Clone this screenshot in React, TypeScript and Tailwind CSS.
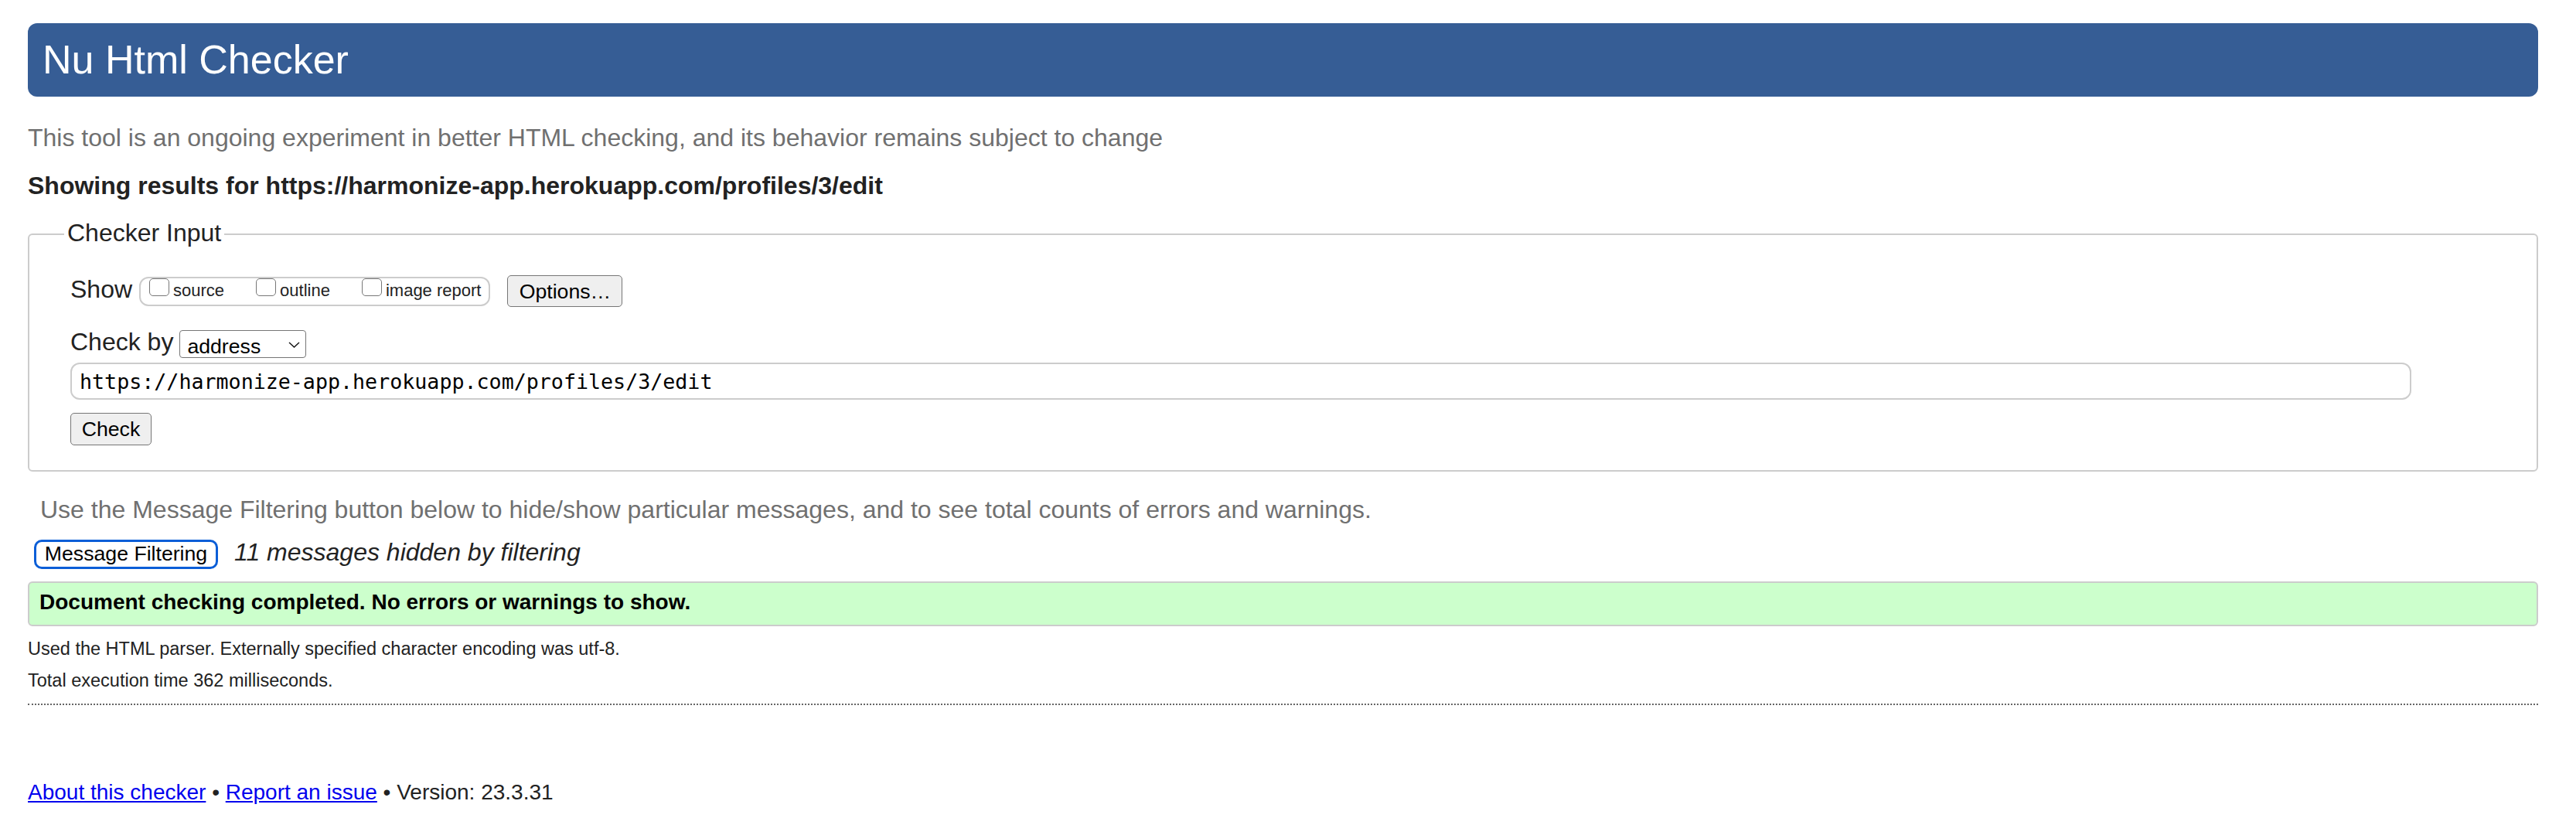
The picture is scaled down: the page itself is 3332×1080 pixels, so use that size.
import { useState } from 'react'

const SHOW_OPTIONS = [
  { id: 'source', label: 'source' },
  { id: 'outline', label: 'outline' },
  { id: 'image', label: 'image report' },
]

function ShowCheckboxes() {
  const [checked, setChecked] = useState<Record<string, boolean>>({})
  return (
    <div className="ml-[9px] flex h-[38px] items-start rounded-[12px] border-2 border-[#cccccc] pl-[11px] pr-[10px]">
      {SHOW_OPTIONS.map((o, i) => (
        <label key={o.id} className={`flex items-start ${i > 0 ? 'ml-[41px]' : ''}`}>
          <input
            type="checkbox"
            checked={!!checked[o.id]}
            onChange={() => setChecked((c) => ({ ...c, [o.id]: !c[o.id] }))}
            className="h-[23px] w-[26px] appearance-none rounded-[5px] border-[1.5px] border-[#777777] bg-white checked:bg-[#0b5ed7]"
          />
          <span className="ml-[5px] mt-[5px] text-[22px] leading-[22px]">{o.label}</span>
        </label>
      ))}
    </div>
  )
}

export default function App() {
  return (
    <div className="h-[1080px] overflow-hidden bg-white pl-[36px] pr-[49px] pt-[30px] font-['Liberation_Sans','Arial',sans-serif] text-[#222222]">
      <h1 className="h-[95px] rounded-[12px] bg-[#365d95] pl-[19px] text-[52px] leading-[95px] text-white">
        Nu Html Checker
      </h1>

      <p className="mt-[33px] text-[32px] leading-[40px] text-[#707070]">
        This tool is an ongoing experiment in better HTML checking, and its behavior remains subject to change
      </p>
      <p className="mt-[22px] text-[32px] font-bold leading-[40px]">
        Showing results for https://harmonize-app.herokuapp.com/profiles/3/edit
      </p>

      <fieldset className="mt-[25px] rounded-[6px] border-2 border-[#cccccc] pb-[32px] pl-[53px] pt-[35px]">
        <legend className="ml-[-8px] px-[4px] pb-[4px] text-[32px] leading-[32px]">Checker Input</legend>

        <div className="flex h-[41px] items-center">
          <span className="mb-[5px] text-[32px] leading-[32px]">Show</span>
          <ShowCheckboxes />
          <button
            type="button"
            className="ml-[22px] h-[41px] w-[149px] rounded-[5px] border-[1.5px] border-[#767676] bg-[#efefef] text-[26.67px] text-black"
          >
            Options…
          </button>
        </div>

        <div className="mt-[30px] flex h-[36px] items-center">
          <span className="mb-[6px] text-[32px] leading-[32px]">Check by</span>
          <div className="relative ml-[8px] h-[36px] w-[164px]">
            <select
              defaultValue="address"
              className="h-full w-full appearance-none rounded-[4px] border-[1.5px] border-[#767676] bg-white pb-[3px] pl-[9px] text-[26.67px] text-black"
            >
              <option value="address">address</option>
              <option value="upload">file upload</option>
              <option value="text">text input</option>
            </select>
            <svg
              className="pointer-events-none absolute left-[141px] top-[15px]"
              width="15"
              height="8"
              viewBox="0 0 15 8"
              fill="none"
            >
              <polyline points="1,1 7.5,7 14,1" stroke="#111" strokeWidth="1.4" />
            </svg>
          </div>
        </div>

        <input
          type="url"
          readOnly
          value="https://harmonize-app.herokuapp.com/profiles/3/edit"
          className="mt-[6px] block h-[48px] w-[3028px] rounded-[12px] border-2 border-[#cccccc] pl-[10px] font-['DejaVu_Sans_Mono','Liberation_Mono',monospace] text-[26.67px] text-black outline-none"
        />

        <button
          type="button"
          className="mt-[17px] h-[42px] w-[105px] rounded-[5px] border-[1.5px] border-[#767676] bg-[#efefef] text-[26.67px] text-black"
        >
          Check
        </button>
      </fieldset>

      <p className="mt-[29px] pl-[16px] text-[32px] leading-[40px] text-[#707070]">
        Use the Message Filtering button below to hide/show particular messages, and to see total counts of errors and
        warnings.
      </p>

      <div className="mt-[19px] flex h-[38px] items-center">
        <button
          type="button"
          className="ml-[8px] h-[38px] w-[238px] rounded-[10px] border-[3px] border-[#0b5ed7] bg-white pb-[3px] text-[26.67px] leading-[30px] text-black"
        >
          Message Filtering
        </button>
        <span className="mb-[6px] ml-[21px] text-[32px] italic leading-[38px]">11 messages hidden by filtering</span>
      </div>

      <div className="mt-[16px] rounded-[6px] border-2 border-[#cccccc] bg-[#ccffcc] pb-[4px] pl-[13px] text-[28px] font-bold leading-[50px] text-black">
        Document checking completed. No errors or warnings to show.
      </div>

      <p className="mt-[14px] text-[23.5px] leading-[30px]">
        Used the HTML parser. Externally specified character encoding was utf-8.
      </p>
      <p className="mt-[11px] text-[23.5px] leading-[30px]">Total execution time 362 milliseconds.</p>

      <div className="mt-[15px] border-t-2 border-dotted border-[#666666]" />

      <p className="mt-[96px] text-[28px] leading-[34px]">
        <a href="#about" className="text-[#0000ee] underline">
          About this checker
        </a>{' '}
        •{' '}
        <a href="#issue" className="text-[#0000ee] underline">
          Report an issue
        </a>{' '}
        • Version: 23.3.31
      </p>
    </div>
  )
}
